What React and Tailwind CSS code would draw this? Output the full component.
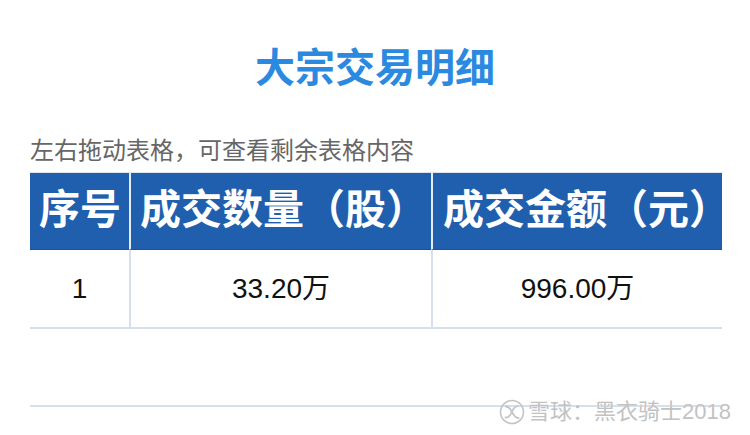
const XueqiuLogo = () => (
  <svg width="26" height="26" viewBox="0 0 26 26" fill="none">
    <circle cx="13" cy="13" r="11.5" stroke="#c4c4c4" strokeWidth="1.6" />
    <path d="M7 7.5c3 0 4.5 2.5 6 5.5s3 6 6.5 6" stroke="#c4c4c4" strokeWidth="1.8" strokeLinecap="round" />
    <path d="M18.5 7c-3.5 1-5 4-6 6.5S9.5 19 6.5 18.5" stroke="#c4c4c4" strokeWidth="1.8" strokeLinecap="round" />
  </svg>
);

const App = () => {
  return (
    <div className="w-[750px] h-[435px] bg-white relative overflow-hidden font-['Liberation_Sans','Noto_Sans_CJK_SC',sans-serif]">
      <h1 className="pt-[46px] text-center text-[40px] leading-[44px] font-bold text-[#2b89e0]">
        大宗交易明细
      </h1>
      <p className="mt-[46px] pl-[30px] text-[24px] leading-[30px] text-[#666666]">
        左右拖动表格，可查看剩余表格内容
      </p>

      <div className="mt-[6px] ml-[30px] w-[692px] border-t border-[#dfe6f0]">
        <div className="grid grid-cols-[99px_302px_291px] h-[77px] text-white text-[41px] font-bold whitespace-nowrap">
          <div className="bg-[#1f5fae] border-b border-[#1a5299] flex items-center pl-[9px]">序号</div>
          <div className="bg-[#1f5fae] border-b border-[#1a5299] border-l-2 border-l-[#e6edf6] flex items-center pl-[9px]">
            成交数量（股）
          </div>
          <div className="bg-[#1f5fae] border-b border-[#1a5299] border-l-2 border-l-[#e6edf6] flex items-center pl-[10px]">
            成交金额（元）
          </div>
        </div>
        <div className="grid grid-cols-[99px_302px_291px] h-[79px] border-b-2 border-[#d5dfee] text-[28px] text-[#111111]">
          <div className="flex items-center justify-center">1</div>
          <div className="flex items-center justify-center border-l-2 border-[#d5dfee]">33.20万</div>
          <div className="flex items-center justify-center border-l-2 border-[#d5dfee]">996.00万</div>
        </div>
        <div className="h-[78px] border-b-2 border-[#d5dfee]" />
      </div>

      <div className="absolute left-[499px] top-[398px] flex items-center gap-[3px] text-[22px] leading-[28px] text-[#c2c2c2] [text-shadow:0_0_1px_#fff]">
        <XueqiuLogo />
        <span>雪球：黑衣骑士2018</span>
      </div>
    </div>
  );
};

export default App;
